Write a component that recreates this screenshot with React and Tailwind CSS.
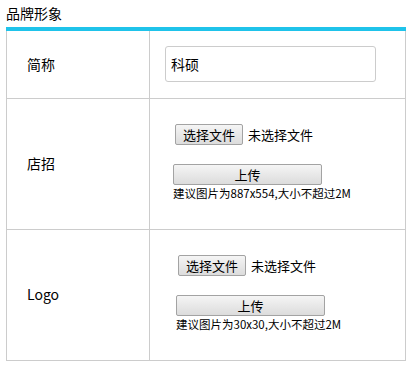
const font = { fontFamily: '"Noto Sans CJK SC", "Noto Sans", sans-serif' };

const FileButton = () => (
  <div className="flex items-center">
    <span className="flex h-[21px] w-[68px] items-center justify-center rounded-[2px] border border-[#a3a3a3] bg-gradient-to-b from-[#f5f5f5] to-[#dcdcdc] text-[13px] leading-none text-black">
      选择文件
    </span>
    <span className="ml-[5px] text-[13px] leading-none text-black">未选择文件</span>
  </div>
);

const Upload = ({ hint }) => (
  <div className="mt-[19px]">
    <span className="flex h-[21px] w-[149px] items-center justify-center rounded-[2px] border border-[#a3a3a3] bg-gradient-to-b from-[#f5f5f5] to-[#dcdcdc] text-[13px] leading-none text-black">
      上传
    </span>
    <p className="mt-[1px] text-[11.5px] leading-[14px] text-black">{hint}</p>
  </div>
);

export default function App() {
  return (
    <div className="h-[370px] w-[412px] bg-white px-[6px]" style={font}>
      <h2 className="pt-[3px] text-[14px] leading-[20px] text-black">品牌形象</h2>
      <div className="mt-[4px] h-[4px] w-[400px] bg-[#1fc3ea]" />
      <table className="w-[400px] border-collapse">
        <tbody>
          <tr className="h-[67px]">
            <td className="w-[143px] border border-t-0 border-[#cccccc] pl-[20px] text-[14px] text-black">简称</td>
            <td className="border border-t-0 border-[#cccccc] pl-[15px]">
              <div className="flex h-[36px] w-[211px] items-center rounded-[3px] border border-[#cccccc] px-[5px] text-[14px] text-black">
                科硕
              </div>
            </td>
          </tr>
          <tr className="h-[131px]">
            <td className="border border-[#cccccc] pl-[20px] text-[14px] text-black">店招</td>
            <td className="border border-[#cccccc] pb-[4px] pl-[23px]">
              <div className="pl-[2px]">
                <FileButton />
              </div>
              <Upload hint="建议图片为887x554,大小不超过2M" />
            </td>
          </tr>
          <tr className="h-[131px]">
            <td className="border border-[#cccccc] pl-[20px] text-[14px] text-black">Logo</td>
            <td className="border border-[#cccccc] pb-[4px] pl-[26px]">
              <div className="pl-[2px]">
                <FileButton />
              </div>
              <Upload hint="建议图片为30x30,大小不超过2M" />
            </td>
          </tr>
        </tbody>
      </table>
    </div>
  );
}
